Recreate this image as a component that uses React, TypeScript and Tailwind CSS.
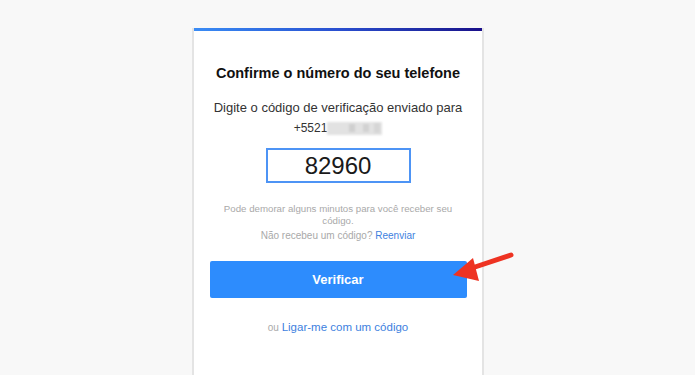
import React from 'react';

export default function App() {
  return (
    <div className="relative min-h-[375px] w-[695px] overflow-hidden bg-[#f8f8f8] font-['Liberation_Sans',Arial,sans-serif]">
      <div className="flex pt-[28px] pl-[192px]">
        <div className="h-[360px] w-[292px] border-x-2 border-[#e4e4e4] bg-white">
          {/* top gradient bar */}
          <div className="h-[3px] bg-gradient-to-r from-[#3a8cf5] via-[#2a4fd0] to-[#1a0f8a]" />

          <div className="flex flex-col items-center">
            <h1 className="mt-[33px] text-[14.5px] font-bold leading-[18px] text-[#111]">
              Confirme o número do seu telefone
            </h1>

            <p className="mt-[16px] text-[13px] leading-[20px] text-[#333]">
              Digite o código de verificação enviado para
            </p>
            <div className="mt-[1px] flex items-center text-[12px] leading-[18px] text-[#333]">
              <span>+5521</span>
              <span className="flex h-[13px] w-[55px] items-center bg-[#e2e2e2] blur-[1px]">
                <span className="ml-[22px] h-[8px] w-[6px] bg-[#cfcfcf]" />
                <span className="ml-[8px] h-[8px] w-[6px] bg-[#d2d2d2]" />
                <span className="ml-[5px] h-[10px] w-[6px] bg-[#d6d6d6]" />
              </span>
            </div>

            <div className="mt-[11px] flex h-[35px] w-[145px] items-center justify-center border-2 border-[#4d94f5] text-[24px] text-[#1a1a1a]">
              82960
            </div>

            <p className="mt-[20px] text-center text-[9.7px] leading-[12px] text-[#a9a9a9]">
              Pode demorar alguns minutos para você receber seu
              <br />
              código.
            </p>
            <p className="mt-[3px] text-[10px] leading-[12px] text-[#a9a9a9]">
              Não recebeu um código? <span className="text-[#3d7fe0]">Reenviar</span>
            </p>

            <button className="mt-[19px] h-[37px] w-[257px] rounded-[2px] bg-[#2d8cfd] text-[13px] font-bold text-white">
              Verificar
            </button>

            <p className="mt-[21px] text-[11.5px] leading-[16px] text-[#3d7fe0]">
              <span className="text-[10px] text-[#aaa]">ou </span>Ligar-me com um código
            </p>
          </div>
        </div>
      </div>

      {/* red annotation arrow */}
      <svg className="absolute left-[448px] top-[248px]" width="68" height="40" viewBox="0 0 68 40">
        <line x1="63" y1="7" x2="24" y2="20" stroke="#ee3322" strokeWidth="5" strokeLinecap="round" />
        <polygon points="5,27 25,10 31,33" fill="#ee3322" />
      </svg>
    </div>
  );
}
